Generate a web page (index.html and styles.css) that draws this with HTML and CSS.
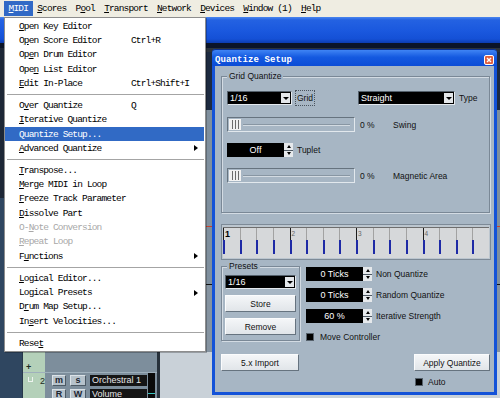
FILE: index.html
```html
<!DOCTYPE html>
<html lang="en">
<head>
  <meta charset="UTF-8" />
  <meta name="viewport" content="width=device-width, initial-scale=1" />
  <title>Quantize Setup</title>
  <link rel="stylesheet" href="styles.css">
</head>
<body>

  <div class="menubar">
    <span class="menubar-item active"><u>M</u>IDI</span>
    <span class="menubar-item"><u>S</u>cores</span>
    <span class="menubar-item">P<u>o</u>ol</span>
    <span class="menubar-item"><u>T</u>ransport</span>
    <span class="menubar-item"><u>N</u>etwork</span>
    <span class="menubar-item"><u>D</u>evices</span>
    <span class="menubar-item"><u>W</u>indow (1)</span>
    <span class="menubar-item"><u>H</u>elp</span>
  </div>

  <!-- project window behind the menu and dialog -->
  <div class="project">
    <div class="project-title"></div>
    <div class="project-toolbar"></div>
    <div class="project-main">
      <div class="inspector"></div>
      <div class="tracks">
        <div class="track-row track-top">
          <div class="track-side"></div>
          <div class="track-head"></div>
        </div>
        <div class="track-row track-add">
          <div class="track-side"><span class="track-plus">+</span></div>
          <div class="track-head"></div>
        </div>
        <div class="track-row track-2">
          <div class="track-side"><span class="track-icon"></span><span class="track-no">2</span></div>
          <div class="track-head">
            <div class="track-lines">
              <div class="track-line">
                <span class="tbtn">m</span>
                <span class="tbtn tbtn-wide">s</span>
                <span class="tname">Orchestral 1</span>
              </div>
              <div class="track-line">
                <span class="tbtn">R</span>
                <span class="tbtn tbtn-wide">W</span>
                <span class="tname">Volume</span>
              </div>
            </div>
            <div class="meter"></div>
          </div>
        </div>
      </div>
      <div class="divider"></div>
      <div class="events"></div>
    </div>
  </div>

  <!-- MIDI menu -->
  <ul class="dropdown">
    <li class="menu-item"><span class="menu-label"><u>O</u>pen Key Editor</span></li>
    <li class="menu-item"><span class="menu-label">O<u>p</u>en Score Editor</span><span class="menu-key">Ctrl+R</span></li>
    <li class="menu-item"><span class="menu-label">Op<u>e</u>n Drum Editor</span></li>
    <li class="menu-item"><span class="menu-label">Ope<u>n</u> List Editor</span></li>
    <li class="menu-item"><span class="menu-label"><u>E</u>dit In-Place</span><span class="menu-key">Ctrl+Shift+I</span></li>
    <li class="menu-sep"></li>
    <li class="menu-item"><span class="menu-label">O<u>v</u>er Quantize</span><span class="menu-key">Q</span></li>
    <li class="menu-item"><span class="menu-label"><u>I</u>terative Quantize</span></li>
    <li class="menu-item selected"><span class="menu-label">Quantize Setup...</span></li>
    <li class="menu-item"><span class="menu-label"><u>A</u>dvanced Quantize</span><span class="menu-arrow"></span></li>
    <li class="menu-sep"></li>
    <li class="menu-item"><span class="menu-label"><u>T</u>ranspose...</span></li>
    <li class="menu-item"><span class="menu-label"><u>M</u>erge MIDI in Loop</span></li>
    <li class="menu-item"><span class="menu-label"><u>F</u>reeze Track Parameter</span></li>
    <li class="menu-item"><span class="menu-label"><u>D</u>issolve Part</span></li>
    <li class="menu-item disabled"><span class="menu-label">O-<u>N</u>ote Conversion</span></li>
    <li class="menu-item disabled"><span class="menu-label"><u>R</u>epeat Loop</span></li>
    <li class="menu-item"><span class="menu-label">F<u>u</u>nctions</span><span class="menu-arrow"></span></li>
    <li class="menu-sep"></li>
    <li class="menu-item"><span class="menu-label"><u>L</u>ogical Editor...</span></li>
    <li class="menu-item"><span class="menu-label">Logical Presets</span><span class="menu-arrow"></span></li>
    <li class="menu-item"><span class="menu-label">D<u>r</u>um Map Setup...</span></li>
    <li class="menu-item"><span class="menu-label">In<u>s</u>ert Velocities...</span></li>
    <li class="menu-sep"></li>
    <li class="menu-item"><span class="menu-label">Rese<u>t</u></span></li>
  </ul>

  <!-- Quantize Setup window -->
  <div class="dialog">
    <div class="dialog-title">
      <span>Quantize Setup</span>
      <svg class="close-btn" width="10" height="10" viewBox="0 0 10 10">
        <rect x="0.5" y="0.5" width="9" height="9" rx="1.5" fill="#e0603f" stroke="#fff" />
        <path d="M3 3 L7 7 M7 3 L3 7" stroke="#fff" stroke-width="1.4" />
      </svg>
    </div>

    <div class="dialog-body">
      <div class="group grid-group">
        <span class="group-title">Grid Quantize</span>

        <div class="q-row">
          <div class="combo combo-grid"><span class="combo-value">1/16</span><span class="combo-arrow"></span></div>
          <span class="focus-label">Grid</span>
          <div class="combo combo-type"><span class="combo-value">Straight</span><span class="combo-arrow"></span></div>
          <span class="label">Type</span>
        </div>

        <div class="q-row">
          <div class="slider"><span class="slider-thumb"></span><span class="slider-track"></span></div>
          <span class="percent">0 %</span>
          <span class="label">Swing</span>
        </div>

        <div class="q-row">
          <div class="spin spin-tuplet"><span class="spin-value">Off</span><span class="spin-arrows"><i class="up"></i><i class="down"></i></span></div>
          <span class="label">Tuplet</span>
        </div>

        <div class="q-row">
          <div class="slider"><span class="slider-thumb"></span><span class="slider-track"></span></div>
          <span class="percent">0 %</span>
          <span class="label">Magnetic Area</span>
        </div>
      </div>

      <div class="ruler">
        <div class="ruler-inner" id="ruler"></div>
      </div>

      <div class="lower">
        <div class="group presets">
          <span class="group-title">Presets</span>
          <div class="combo"><span class="combo-value">1/16</span><span class="combo-arrow"></span></div>
          <button class="btn">Store</button>
          <button class="btn">Remove</button>
        </div>

        <div class="options">
          <div class="opt-row">
            <div class="spin"><span class="spin-value">0 Ticks</span><span class="spin-arrows"><i class="up"></i><i class="down"></i></span></div>
            <span class="label">Non Quantize</span>
          </div>
          <div class="opt-row">
            <div class="spin"><span class="spin-value">0 Ticks</span><span class="spin-arrows"><i class="up"></i><i class="down"></i></span></div>
            <span class="label">Random Quantize</span>
          </div>
          <div class="opt-row">
            <div class="spin"><span class="spin-value">60 %</span><span class="spin-arrows"><i class="up"></i><i class="down"></i></span></div>
            <span class="label">Iterative Strength</span>
          </div>
          <div class="opt-row check-row">
            <span class="check-box"></span>
            <span class="label">Move Controller</span>
          </div>
        </div>
      </div>

      <div class="actions">
        <button class="btn btn-import">5.x Import</button>
        <div class="apply-col">
          <button class="btn btn-apply">Apply Quantize</button>
          <div class="auto-row">
            <span class="check-box"></span>
            <span class="label">Auto</span>
          </div>
        </div>
      </div>
    </div>
  </div>

  <script>
    // Build the 16 grid steps of the quantize preview
    const ruler = document.getElementById('ruler');
    for (let i = 0; i < 16; i++) {
      const step = document.createElement('div');
      step.className = 'step' + (i % 4 === 0 ? ' bar' : '');
      const num = i % 4 === 0 ? (i / 4 + 1) : '';
      step.innerHTML = `<div class="step-top"><span class="${i === 0 ? 'num first' : 'num'}">${num}</span></div><div class="step-tick"></div>`;
      ruler.appendChild(step);
    }
  </script>

</body>
</html>
```

FILE: styles.css
```css
* {
  box-sizing: border-box;
}

body {
  margin: 0;
  width: 500px;
  height: 398px;
  overflow: hidden;
  position: relative;
  font-family: 'Liberation Sans', Arial, sans-serif;
  background: #c9d1d8;
}

/* ---------- menu bar ---------- */

.menubar {
  height: 17px;
  display: flex;
  align-items: center;
  padding-left: 4px;
  background: #efede2;
  font-family: 'Liberation Mono', monospace;
  font-size: 9.5px;
  letter-spacing: -0.85px;
  color: #000;
}

.menubar-item {
  height: 15px;
  line-height: 15px;
  padding: 0 4.6px;
  white-space: pre;
}

.menubar-item.active {
  background: #3169c6;
  color: #fff;
}

/* ---------- project window (background) ---------- */

.project {
  height: 381px;
  display: flex;
  flex-direction: column;
}

.project-title {
  height: 26px;
  background: linear-gradient(#4a86ee 0, #2462e2 3px, #1a58de 14px, #1450d6 22px, #0c3cb0 26px);
}

.project-toolbar {
  height: 5px;
  background: #0b1428;
}

.project-main {
  flex: 1;
  display: flex;
  overflow: hidden;
}

.inspector {
  width: 23px;
  background: linear-gradient(#1d2736 0 150px, #2f4660 150px);
  border-right: 1px solid #27384a;
}

.tracks {
  width: 134px;
  display: flex;
  flex-direction: column;
}

.track-row {
  display: flex;
  overflow: hidden;
}

.track-top {
  flex: 1;
}

.track-add {
  height: 21px;
  border-bottom: 1px solid #9fb0bc;
}

.track-2 {
  height: 25px;
}

.track-side {
  width: 22px;
  background: #b4d0b9;
  display: flex;
  align-items: flex-start;
  font-size: 9px;
  color: #1c2a22;
}

.track-head {
  flex: 1;
  display: flex;
  background: #7d8e9c;
}

.track-plus {
  margin: 10px 0 0 3px;
  font-size: 9px;
  font-weight: bold;
}

.track-icon {
  width: 5px;
  height: 5px;
  margin: 4px 0 0 5px;
  border: 1px solid #eef4ef;
  border-top: 0;
}

.track-no {
  margin: 3px 0 0 7px;
  line-height: 10px;
}

.track-lines {
  display: flex;
  flex-direction: column;
  gap: 3px;
  padding: 2px 0 0 7px;
  width: 102px;
}

.track-line {
  display: flex;
  gap: 4px;
  height: 11px;
}

.tbtn {
  width: 14px;
  background: #b6c2cb;
  border: 1px solid;
  border-color: #dbe2e7 #4d5a65 #4d5a65 #dbe2e7;
  font-size: 9px;
  font-weight: bold;
  line-height: 9px;
  text-align: center;
  color: #1b2430;
}

.tbtn-wide {
  width: 16px;
}

.tname {
  width: 57px;
  background: #151515;
  color: #e6e6e6;
  font-size: 9px;
  line-height: 11px;
  padding-left: 2px;
}

.meter {
  width: 7px;
  margin-left: 1px;
  background: linear-gradient(#0a0a0a 0 20px, #39c6c0 20px 21px, #0a0a0a 21px);
}

.divider {
  width: 3px;
  background: #27313b;
}

.events {
  flex: 1;
  background: linear-gradient(#2b333c 0 4px, #1d2a40 4px 62px, #7f8f9d 62px 178px, #c9412f 178px 179px, #7f8f9d 179px 236px, #111 236px 237px, #8593a0 237px 304px, #c9d1d8 304px);
}

/* ---------- MIDI dropdown ---------- */

.dropdown {
  position: absolute;
  left: 4px;
  top: 17px;
  width: 202px;
  margin: 0;
  padding: 1px 0;
  list-style: none;
  background: #fff;
  border: 1px solid #8d8d8d;
  box-shadow: 1px 1px 0 rgba(0, 0, 0, 0.25);
  font-family: 'Liberation Mono', monospace;
  font-size: 9.5px;
  letter-spacing: -0.85px;
  color: #000;
}

.menu-item {
  display: flex;
  align-items: center;
  height: 14.35px;
  padding-left: 14px;
  margin-right: 1px;
  white-space: pre;
}

.menu-item.selected {
  background: #316ac5;
  color: #fff;
}

.menu-item.disabled {
  color: #a8a8a8;
}

.menu-label {
  width: 112px;
}

.menu-arrow {
  margin-left: auto;
  margin-right: 6px;
  border-left: 4px solid #000;
  border-top: 3.5px solid transparent;
  border-bottom: 3.5px solid transparent;
}

.menu-sep {
  height: 1px;
  margin: 3.25px 1px 3.25px 2px;
  background: #a4a4a4;
}

/* ---------- Quantize Setup window ---------- */

.dialog {
  position: absolute;
  left: 212px;
  top: 49px;
  width: 285px;
  height: 346px;
  display: flex;
  flex-direction: column;
  padding: 0 3px 3px;
  background: #1352d8;
  border-radius: 4px 4px 0 0;
}

.dialog-title {
  height: 17px;
  margin: 0 -3px;
  padding: 3px 3px 0 3px;
  display: flex;
  align-items: center;
  justify-content: space-between;
  background: linear-gradient(#3f84f4, #1459e0 45%, #0b4cd6);
  border-radius: 4px 4px 0 0;
  border-top: 1px solid #0a2f90;
  color: #fff;
  font-family: 'Liberation Mono', monospace;
  font-weight: bold;
  font-size: 9px;
  letter-spacing: 0.1px;
}

.close-btn {
  display: block;
}

.dialog-body {
  flex: 1;
  display: flex;
  flex-direction: column;
  padding: 0 4px 0 6px;
  background: #a7b6c4;
  font-size: 8.5px;
  color: #111;
}

.group {
  position: relative;
  border: 1px solid #7a8896;
  box-shadow: 1px 1px 0 #d3dbe3, inset 1px 1px 0 #d3dbe3;
}

.group-title {
  position: absolute;
  top: -6px;
  left: 5px;
  padding: 0 2px;
  line-height: 10px;
  background: #a7b6c4;
}

.grid-group {
  margin-top: 10px;
  height: 137px;
  padding: 13px 0 0 5px;
  display: flex;
  flex-direction: column;
  gap: 11px;
}

.q-row {
  display: flex;
  align-items: center;
}

.label {
  white-space: nowrap;
}

.combo {
  display: flex;
  height: 14px;
  background: #000;
  border: 1px solid;
  border-color: #55616c #e4e9ee #e4e9ee #55616c;
}

.combo-grid {
  width: 65px;
}

.combo-type {
  width: 97px;
  margin-left: 43px;
  margin-right: 4px;
}

.combo-value {
  flex: 1;
  color: #fff;
  font-size: 9px;
  line-height: 12px;
  padding-left: 2px;
}

.combo-arrow {
  width: 9px;
  margin: 1px;
  background: #e4e7ea;
  display: flex;
  align-items: center;
  justify-content: center;
}

.combo-arrow::after {
  content: "";
  border-top: 3px solid #000;
  border-left: 3px solid transparent;
  border-right: 3px solid transparent;
}

.focus-label {
  margin-left: 3px;
  height: 16px;
  line-height: 14px;
  padding: 0 1px;
  border: 1px dotted #4a545e;
}

.slider {
  width: 128px;
  height: 15px;
  display: flex;
  align-items: center;
  padding-left: 1px;
  border: 1px solid;
  border-color: #66737f #e2e8ed #e2e8ed #66737f;
}

.slider-thumb {
  width: 12px;
  height: 11px;
  border: 1px solid #f2f2f2;
  background: repeating-linear-gradient(90deg, #f0f0f0 0 2px, #6b6b6b 2px 3px);
}

.slider-track {
  flex: 1;
  height: 2px;
  margin: 0 4px 0 2px;
  border-top: 1px solid #8896a3;
  border-bottom: 1px solid #d3dbe2;
}

.percent {
  width: 33px;
  margin-left: 5px;
}

.spin {
  display: flex;
  height: 14px;
}

.spin-tuplet {
  margin-right: 4px;
}

.spin-value {
  width: 57px;
  background: #000;
  color: #fff;
  text-align: center;
  font-size: 9px;
  line-height: 14px;
}

.spin-arrows {
  width: 9px;
  display: flex;
  flex-direction: column;
  gap: 1px;
  background: #4d5863;
}

.spin-arrows i {
  flex: 1;
  background: #e6e9ec;
  display: flex;
  align-items: center;
  justify-content: center;
}

.spin-arrows .up::after {
  content: "";
  border-bottom: 3px solid #000;
  border-left: 2.5px solid transparent;
  border-right: 2.5px solid transparent;
}

.spin-arrows .down::after {
  content: "";
  border-top: 3px solid #000;
  border-left: 2.5px solid transparent;
  border-right: 2.5px solid transparent;
}

/* quantize grid preview */

.ruler {
  margin-top: 11px;
  width: 270px;
  height: 36px;
  padding: 2px 1px 1px;
  border: 1px solid #7d8a97;
  background: #bcc6cf;
}

.ruler-inner {
  display: flex;
  height: 31px;
  background: #d6d8da;
  border-top: 1px solid #6e6e6e;
}

.step {
  flex: 1;
  display: flex;
  flex-direction: column;
}

.step-top {
  height: 12px;
  border-left: 1px solid #a2a2a2;
  padding: 2px 0 0 1px;
}

.step.bar .step-top {
  border-left-color: #1d1d1d;
}

.num {
  display: block;
  font-size: 6.5px;
  line-height: 7px;
  color: #666;
}

.num.first {
  font-size: 9px;
  line-height: 8px;
  font-weight: bold;
  color: #000;
}

.step-tick {
  width: 2px;
  height: 14px;
  background: #1e2aa6;
}

/* presets and options */

.lower {
  display: flex;
  margin-top: 6px;
}

.presets {
  width: 79px;
  height: 75px;
  padding: 8px 3px 0;
  display: flex;
  flex-direction: column;
  gap: 6px;
}

.btn {
  height: 17px;
  padding: 0;
  font-family: 'Liberation Sans', Arial, sans-serif;
  font-size: 8.5px;
  color: #111;
  background: linear-gradient(#f4f6f8, #e1e5e9);
  border: 1px solid;
  border-color: #fbfcfd #66737f #66737f #fbfcfd;
}

.options {
  margin-left: 6px;
  padding-top: 1px;
  display: flex;
  flex-direction: column;
  gap: 7px;
}

.opt-row {
  display: flex;
  align-items: center;
  gap: 4px;
}

.check-row {
  margin-top: 2px;
  gap: 6px;
}

.check-box {
  width: 8px;
  height: 8px;
  background: #000;
  border: 1px solid #56616b;
}

.actions {
  margin-top: 12px;
  display: flex;
  justify-content: space-between;
  align-items: flex-start;
}

.btn-import {
  width: 78px;
}

.apply-col {
  display: flex;
  flex-direction: column;
}

.btn-apply {
  width: 76px;
}

.auto-row {
  margin: 6px 0 0 1px;
  display: flex;
  align-items: center;
  gap: 5px;
}
```
